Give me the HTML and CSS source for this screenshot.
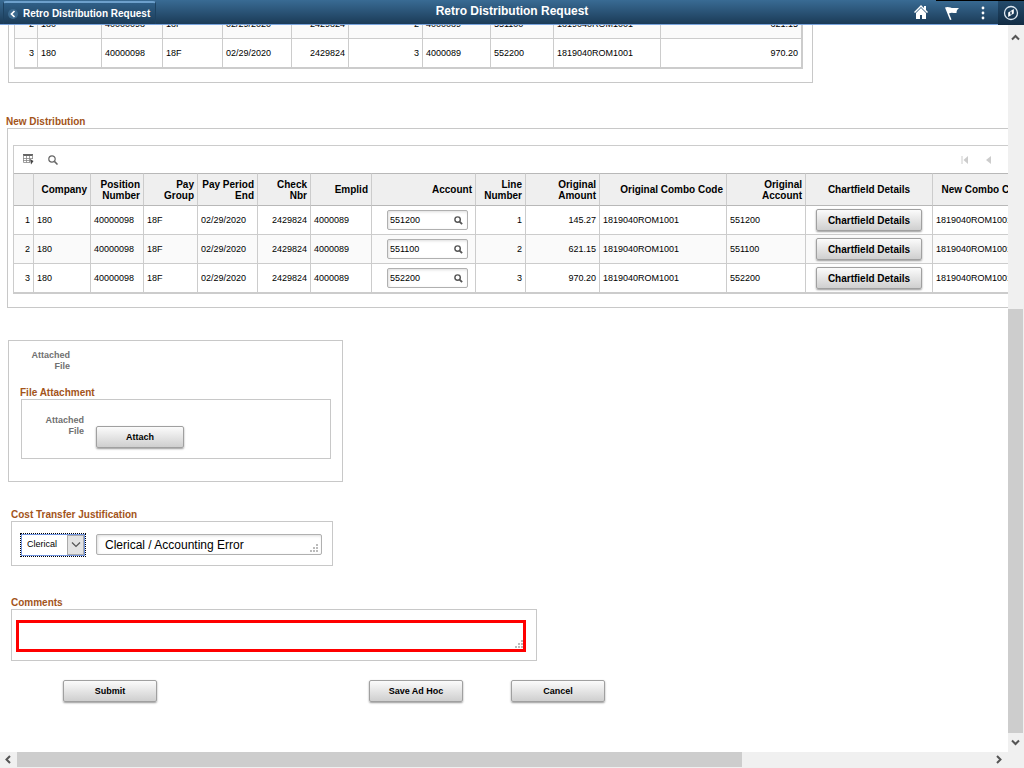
FILE: index.html
```html
<!DOCTYPE html>
<html lang="en">
<head>
<meta charset="utf-8">
<title>Retro Distribution Request</title>
<link rel="stylesheet" href="styles.css">
</head>
<body>
<svg class="defs" aria-hidden="true">
  <symbol id="lens" viewBox="0 0 10 10"><circle cx="4" cy="4" r="3" fill="none" stroke="currentColor" stroke-width="1.6"/><path d="M6.2 6.2L9 9" stroke="currentColor" stroke-width="2"/></symbol>
</svg>
<header class="banner">
  <button class="back" type="button"><svg width="10" height="10" viewBox="0 0 10 10"><circle cx="5" cy="5" r="5" fill="#3c6a8f"/><path d="M6.5 2L3.5 5l3 3" fill="none" stroke="#fff" stroke-width="1.7"/></svg>Retro Distribution Request</button>
  <h1 class="title">Retro Distribution Request</h1>
  <nav class="tools">
    <button class="tool" type="button" aria-label="Home"><svg width="14" height="14" viewBox="0 0 14 14"><path d="M7 0L0 7l1 1 6-6 6 6 1-1-2-2V1h-2v2zM7 3L2 8v6h4v-4h2v4h4V8z" fill="#fff"/></svg></button>
    <button class="tool topped" type="button" aria-label="Notifications"><svg width="14" height="14" viewBox="0 0 14 14"><path d="M0 1.500C3 0 6 2 8 2h6c-2 1.500-2.500 3-2.500 5C9 7.500 7 6 4 7.500L6.500 13.500 5 14z" fill="#fff"/></svg></button>
    <button class="tool topped" type="button" aria-label="Actions"><svg width="4" height="14" viewBox="0 0 4 14"><g fill="#fff"><circle cx="2" cy="2" r="1.400"/><circle cx="2" cy="7" r="1.400"/><circle cx="2" cy="12" r="1.400"/></g></svg></button>
    <button class="tool topped nav" type="button" aria-label="Navigator"><svg width="16" height="16" viewBox="0 0 16 16"><circle cx="8" cy="8" r="6.500" fill="none" stroke="#dfe9f2" stroke-width="1.300"/><path d="M10.800 4v4.500L5.200 12V7.500z" fill="#fff"/><path d="M8 6.500v3" stroke="#173650" stroke-width="1.500"/></svg></button>
  </nav>
</header>
<div class="window">
<main class="page">
  <section class="box original">
    <table class="grid first">
      <colgroup><col><col><col><col><col><col><col><col><col><col><col></colgroup>
      <tbody>
        <tr><td class="r">2</td><td>180</td><td>40000098</td><td>18F</td><td>02/29/2020</td><td class="r">2429824</td><td class="r">2</td><td>4000089</td><td>551100</td><td>1819040ROM1001</td><td class="r">621.15</td></tr>
        <tr><td class="r">3</td><td>180</td><td>40000098</td><td>18F</td><td>02/29/2020</td><td class="r">2429824</td><td class="r">3</td><td>4000089</td><td>552200</td><td>1819040ROM1001</td><td class="r">970.20</td></tr>
      </tbody>
    </table>
  </section>

  <h2 class="heading dist-head">New Distribution</h2>
  <section class="box dist">
    <div class="gridbox">
      <div class="toolbar">
        <button class="icon" type="button" aria-label="Personalize"><svg width="11" height="11" viewBox="0 0 11 11"><path d="M0 0h10v2H0z" fill="#666"/><path d="M.5 1v7.500H7M0 4.500h10M0 6.500h7M3.500 2v6.500M6.500 2v6.500M9.500 1v4" fill="none" stroke="#888" stroke-width=".8"/><path d="M7 5l3.500 2L8 10.500z" fill="#444"/></svg></button>
        <button class="icon" type="button" aria-label="Find"><svg width="10" height="10" viewBox="0 0 10 10"><circle cx="4" cy="4" r="3.200" fill="none" stroke="#666" stroke-width="1.200"/><path d="M6.400 6.400L9.500 9.500" stroke="#666" stroke-width="1.500"/></svg></button>
        <div class="pager">
          <button class="icon" type="button" aria-label="First" disabled><svg width="8" height="8" viewBox="0 0 8 8"><path d="M1 0v8" stroke="#ccc"/><path d="M7 0v8L2.500 4z" fill="#ccc"/></svg></button>
          <button class="icon" type="button" aria-label="Previous" disabled><svg width="8" height="8" viewBox="0 0 8 8"><path d="M6 0v8L1 4z" fill="#ccc"/></svg></button>
          <select class="range" aria-label="Rows"></select>
        </div>
      </div>
      <table class="grid second">
        <colgroup><col><col><col><col><col><col><col><col><col><col><col><col><col><col></colgroup>
        <thead><tr><th></th><th>Company</th><th>Position<br>Number</th><th>Pay<br>Group</th><th>Pay Period<br>End</th><th>Check<br>Nbr</th><th>Emplid</th><th>Account</th><th>Line<br>Number</th><th>Original<br>Amount</th><th>Original Combo Code</th><th>Original<br>Account</th><th class="c">Chartfield Details</th><th>New Combo Code</th></tr></thead>
        <tbody>
          <tr><td class="r">1</td><td>180</td><td>40000098</td><td>18F</td><td>02/29/2020</td><td class="r">2429824</td><td>4000089</td><td><div class="lookup"><input type="text" value="551200" aria-label="Account 1"><button type="button" aria-label="Look up account 1"><svg width="9" height="9"><use href="#lens"/></svg></button></div></td><td class="r">1</td><td class="r">145.27</td><td>1819040ROM1001</td><td>551200</td><td class="c"><button class="btn chart" type="button">Chartfield Details</button></td><td>1819040ROM1001</td></tr>
          <tr><td class="r">2</td><td>180</td><td>40000098</td><td>18F</td><td>02/29/2020</td><td class="r">2429824</td><td>4000089</td><td><div class="lookup"><input type="text" value="551100" aria-label="Account 2"><button type="button" aria-label="Look up account 2"><svg width="9" height="9"><use href="#lens"/></svg></button></div></td><td class="r">2</td><td class="r">621.15</td><td>1819040ROM1001</td><td>551100</td><td class="c"><button class="btn chart" type="button">Chartfield Details</button></td><td>1819040ROM1001</td></tr>
          <tr><td class="r">3</td><td>180</td><td>40000098</td><td>18F</td><td>02/29/2020</td><td class="r">2429824</td><td>4000089</td><td><div class="lookup"><input type="text" value="552200" aria-label="Account 3"><button type="button" aria-label="Look up account 3"><svg width="9" height="9"><use href="#lens"/></svg></button></div></td><td class="r">3</td><td class="r">970.20</td><td>1819040ROM1001</td><td>552200</td><td class="c"><button class="btn chart" type="button">Chartfield Details</button></td><td>1819040ROM1001</td></tr>
        </tbody>
      </table>
    </div>
  </section>

  <section class="box files">
    <div class="label outer">Attached<br>File</div>
    <h2 class="heading">File Attachment</h2>
    <div class="box attach">
      <label class="label" for="attach">Attached<br>File</label>
      <button class="btn" id="attach" type="button">Attach</button>
    </div>
  </section>

  <section class="group just-group">
    <h2 class="heading">Cost Transfer Justification</h2>
    <div class="box just">
      <div class="select"><select aria-label="Justification"><option>Clerical</option></select><span class="drop"><svg width="10" height="6" viewBox="0 0 10 6"><path d="M1 .5l4 4 4-4" fill="none" stroke="#555" stroke-width="1.200"/></svg></span></div>
      <div class="area"><textarea rows="1" aria-label="Justification text">Clerical / Accounting Error</textarea><svg class="grip" width="8" height="8" viewBox="0 0 8 8"><path d="M6 0h2v2H6zM3 3h2v2H3zM6 3h2v2H6zM0 6h2v2H0zM3 6h2v2H3zM6 6h2v2H6z" fill="#bbb"/></svg></div>
    </div>
  </section>

  <section class="group comment-group">
    <h2 class="heading">Comments</h2>
    <div class="box comments">
      <div class="area red"><textarea rows="1" aria-label="Comments"></textarea><svg class="grip" width="8" height="8" viewBox="0 0 8 8"><path d="M6 0h2v2H6zM3 3h2v2H3zM6 3h2v2H6zM0 6h2v2H0zM3 6h2v2H3zM6 6h2v2H6z" fill="#bbb"/></svg></div>
    </div>
  </section>

  <div class="actions">
    <button class="btn submit" type="button">Submit</button>
    <button class="btn save" type="button">Save Ad Hoc</button>
    <button class="btn" type="button">Cancel</button>
  </div>
</main>
<div class="vbar" aria-hidden="true">
  <svg width="16" height="24" viewBox="0 0 16 24"><path d="M4 14.500L7.500 11l3.500 3.500" fill="none" stroke="#555" stroke-width="2"/></svg>
  <div class="gap"></div><div class="thumb"></div>
  <svg width="16" height="19" viewBox="0 0 16 19"><path d="M4 7.500L7.500 11 11 7.500" fill="none" stroke="#555" stroke-width="2"/></svg>
</div>
<div class="hbar" aria-hidden="true">
  <svg width="17" height="15" viewBox="0 0 17 15"><path d="M10 4L6.500 7.500 10 11" fill="none" stroke="#555" stroke-width="2"/></svg>
  <div class="thumb"></div><div class="gap"></div>
  <svg width="17" height="15" viewBox="0 0 17 15"><path d="M6 4l3.500 3.500L6 11" fill="none" stroke="#555" stroke-width="2"/></svg>
</div>
</div>
</body>
</html>
```
FILE: styles.css
```css
* { box-sizing: border-box; }
body {
  margin: 0; height: 100vh; overflow: hidden;
  display: flex; flex-direction: column;
  background: #fff; color: #000;
  font: 9px/11px "Liberation Sans", Arial, sans-serif;
}
button, input, select, textarea { font: inherit; color: inherit; margin: 0; }
button { padding: 0; border: 0; background: none; }
svg { display: block; flex: none; }
.defs { position: absolute; width: 0; height: 0; }

/* Banner */
.banner {
  flex: none; height: 25px;
  display: grid; grid-template-columns: 1fr auto 1fr;
  background: linear-gradient(#396b94, #1b3b57);
  border-bottom: 1px solid #78a3dc;
  color: #fff;
}
.back {
  justify-self: start; margin: 1px 0 0 3px; padding: 0 5px 0 4px;
  display: flex; align-items: center; gap: 5px;
  border: 1px solid #1d4261; border-top: 2px solid #6da0cc; border-bottom: 0; border-radius: 3px 3px 0 0;
  background: linear-gradient(#2f5f87, #1b3b57);
  font-size: 10px; font-weight: bold;
}
.title { margin: 0; font-size: 12px; line-height: 22px; font-weight: bold; }
.tools { justify-self: end; display: flex; }
.tool { width: 31px; display: flex; align-items: center; justify-content: center; }
.topped { border-top: 1px solid #000; }
.nav { width: 26px; margin-bottom: -1px; background: linear-gradient(#234a6b, #122c44); }

/* Scrolling window */
.window { flex: 1; min-height: 0; display: grid; grid-template: minmax(0, 1fr) 16px / minmax(0, 1fr) 16px; }
.page { overflow: hidden; }
.vbar { grid-column: 2; grid-row: 1 / 3; display: flex; flex-direction: column; padding-bottom: 16px; background: #f0f0f0; }
.hbar { grid-column: 1; grid-row: 2; display: flex; background: #f0f0f0; }
.thumb { background: #cdcdcd; }
.vbar .gap { flex: 260; }
.vbar .thumb { flex: 424; margin-right: 1px; }
.hbar .thumb { flex: 725; margin-bottom: 1px; }
.hbar .gap { flex: 249; }

/* Boxes and headings */
.box { border: 1px solid #c8c8c8; }
.heading { margin: 0; font-size: 10px; line-height: 13px; font-weight: bold; color: #a3541a; }
.label { font-weight: bold; color: #707070; text-align: right; }

/* Grids */
.grid { table-layout: fixed; border-spacing: 0; border-left: 1px solid #ccc; border-bottom: 1px solid #ccc; }
.grid td, .grid th { padding: 0 3px; border-right: 1px solid #ccc; border-bottom: 1px solid #ccc; white-space: nowrap; }
.grid td { height: 29px; text-align: left; }
.grid .r { text-align: right; }
.grid .c { text-align: center; }
.grid th { height: 33px; background: #efefef; border-top: 1px solid #b8b8b8; border-bottom-color: #b8b8b8; font-size: 10px; font-weight: bold; text-align: right; }

.original { width: 805px; margin: -15px 0 0 8px; padding: 0 8px 13px 5px; border-top: 0; }
.first { width: 789px; border-right: 1px solid #ccc; }
.first tr:nth-child(odd) td, .second tbody tr:nth-child(even) td { background: #fafafa; }
.first col:nth-child(1) { width: 23px; }
.first col:nth-child(2) { width: 64px; }
.first col:nth-child(3) { width: 61px; }
.first col:nth-child(4) { width: 60px; }
.first col:nth-child(5) { width: 69px; }
.first col:nth-child(6) { width: 57px; }
.first col:nth-child(7) { width: 74px; }
.first col:nth-child(8) { width: 68px; }
.first col:nth-child(9) { width: 63px; }
.first col:nth-child(10) { width: 107px; }

.dist-head { margin: 32px 0 0 6px; }
.dist { width: max-content; margin-left: 7px; padding: 16px 5px 13px; }
.gridbox { border-top: 1px solid #ccc; }
.toolbar { height: 27px; display: flex; align-items: center; gap: 14px; padding-left: 9px; border-left: 1px solid #ccc; }
.icon { display: flex; }
.pager { display: flex; align-items: center; gap: 16px; margin-left: 889px; }
.range { width: 60px; height: 22px; border: 1px solid #aaa; border-radius: 3px; background: #fff; appearance: none; }
.second { width: 1018px; }
.second col:nth-child(1) { width: 20px; }
.second col:nth-child(2) { width: 57px; }
.second col:nth-child(3) { width: 53px; }
.second col:nth-child(4) { width: 54px; }
.second col:nth-child(5) { width: 60px; }
.second col:nth-child(6) { width: 53px; }
.second col:nth-child(7) { width: 61px; }
.second col:nth-child(8) { width: 104px; }
.second col:nth-child(9) { width: 50px; }
.second col:nth-child(10) { width: 74px; }
.second col:nth-child(11) { width: 127px; }
.second col:nth-child(12) { width: 79px; }
.second col:nth-child(13) { width: 127px; }
.lookup { display: flex; align-items: center; width: 81px; height: 20px; margin-left: auto; margin-right: 4px; padding-right: 4px; border: 1px solid #b0b0b0; border-radius: 2px; background: #fff; box-shadow: inset 1px 1px 3px #ddd; color: #555; }
.lookup input { flex: 1; min-width: 0; padding: 0 2px; border: 0; background: none; color: #000; }

/* Buttons */
.btn { width: 94px; height: 22px; border: 1px solid #a0a0a0; border-radius: 2px; background: linear-gradient(#fbfbfb, #cfcfcf); box-shadow: 0 1px 2px #999; font-weight: bold; }
.chart { width: 106px; font-size: 10px; }

/* Attachments */
.files { width: 335px; margin: 32px 0 0 8px; padding: 9px 11px 22px; }
.label.outer { width: 50px; }
.files .heading { margin-top: 14px; }
.attach { display: flex; align-items: flex-start; gap: 12px; height: 60px; margin-left: 1px; padding: 15px 11px 0; }
.attach .label { width: 51px; }
.attach .btn { width: 88px; margin-top: 11px; }

/* Justification and comments */
.group { margin-left: 11px; }
.just-group { margin-top: 26px; width: 322px; }
.just { display: flex; align-items: center; gap: 10px; height: 45px; padding: 2px 10px 0 8px; }
.select { position: relative; width: 66px; height: 24px; border: 1px dotted #000; }
.select select { width: 100%; height: 100%; padding: 0 20px 0 5px; border: 1px solid #6f93e0; border-radius: 0; background: #fff; appearance: none; }
.drop { position: absolute; top: 1px; right: 1px; bottom: 1px; width: 17px; display: flex; align-items: center; justify-content: center; border: 1px solid #aaa; background: #e3e3e3; pointer-events: none; }
.area { position: relative; flex: 1; height: 21px; border: 1px solid #b0b0b0; border-radius: 2px; box-shadow: inset 1px 1px 3px #ddd; }
.area textarea { display: block; width: 100%; height: 100%; padding: 2px 8px 0; border: 0; background: none; resize: none; overflow: hidden; font-size: 12px; line-height: 16px; outline: 0; }
.grip { position: absolute; right: 3px; bottom: 2px; }
.comment-group { margin-top: 30px; width: 526px; }
.comments { height: 52px; padding: 10px 10px 8px 4px; }
.red { height: 32px; border: 3px solid #f00; border-radius: 0; box-shadow: none; }
.red .grip { right: 0; bottom: 1px; }

.actions { display: flex; margin: 19px 0 0 63px; }
.submit { margin-right: 212px; }
.save { margin-right: 48px; }
```
